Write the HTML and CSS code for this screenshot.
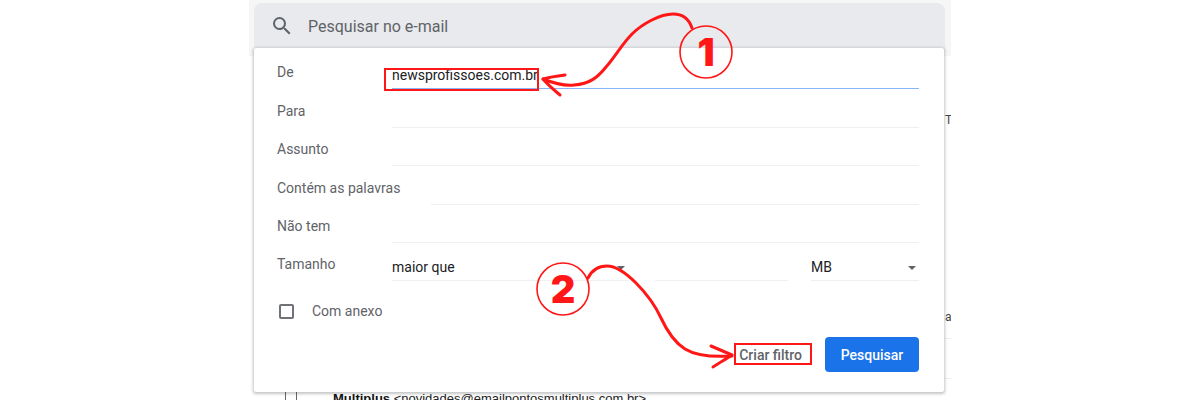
FILE: index.html
```html
<!DOCTYPE html>
<html lang="pt-BR">
<head>
<meta charset="utf-8">
<title>Pesquisar no e-mail</title>
<link rel="stylesheet" href="styles.css">
</head>
<body>
<div class="app">
  <header class="topbar">
    <div class="searchbar">
      <svg class="search-icon" viewBox="0 0 24 24" width="24" height="24"><path fill="#5f6368" d="M15.5 14h-.79l-.28-.27A6.47 6.47 0 0 0 16 9.5 6.5 6.5 0 1 0 9.5 16c1.61 0 3.09-.59 4.23-1.57l.27.28v.79l5 4.99L20.49 19l-4.99-5zm-6 0C7.01 14 5 11.99 5 9.5S7.01 5 9.5 5 14 7.01 14 9.5 11.99 14 9.5 14z"/></svg>
      <span class="search-text">Pesquisar no e-mail</span>
    </div>
  </header>
  <div class="behind">
    <div class="peek peek-t">T</div>
    <div class="peek peek-a">a</div>
    <div class="rule rule-1"></div>
    <div class="rule rule-2"></div>
    <div class="mailrow"><span class="cb"></span><span class="cb"></span><span class="mail"><b>Multiplus</b> &lt;novidades@emailpontosmultiplus.com.br&gt;</span></div>
  </div>
  <section class="card">
    <div class="row"><span class="label">De</span><span class="field active">newsprofissoes.com.br</span></div>
    <div class="row"><span class="label">Para</span><span class="field"></span></div>
    <div class="row"><span class="label">Assunto</span><span class="field"></span></div>
    <div class="row"><span class="label auto">Contém as palavras</span><span class="field"></span></div>
    <div class="row"><span class="label">Não tem</span><span class="field"></span></div>
    <div class="row">
      <span class="label">Tamanho</span>
      <span class="field size-op">maior que<i class="caret"></i></span>
      <span class="field size-num"></span>
      <span class="field size-unit">MB<i class="caret"></i></span>
    </div>
    <div class="check-row"><span class="checkbox"></span><span class="check-label">Com anexo</span></div>
    <div class="actions">
      <span class="create">Criar filtro</span>
      <button class="submit" type="button">Pesquisar</button>
    </div>
  </section>
</div>
<svg class="notes" viewBox="0 0 1200 400" width="1200" height="400">
  <g fill="none" stroke="#ff1616">
    <rect x="385" y="69" width="153" height="21" stroke-width="2"/>
    <rect x="735" y="344" width="76" height="20" stroke-width="2"/>
    <circle cx="706" cy="52" r="26" stroke-width="1.6"/>
    <circle cx="563" cy="289" r="26" stroke-width="1.6"/>
    <g stroke-width="3" stroke-linecap="round" stroke-linejoin="round">
      <path d="M692 28C689 19 682 14 673 14C660 14 642 24 632 34C622 44 615 57 606 67C598 77 590 84 574 85C564 86 553 83 543 79"/>
      <path d="M565 75C557 76 550 77 543 79C548 85 554 90 560 95"/>
      <path d="M588 278C592 270 599 266 607 266C618 266 628 275 636 283C648 295 655 305 661 318C667 331 674 342 685 349C698 357 716 357 732 356"/>
      <path d="M711 346C718 349 725 352 732 355C726 359 719 363 713 367"/>
    </g>
  </g>
  <text class="num" x="706" y="66">1</text>
  <text class="num" x="563" y="303">2</text>
</svg>
</body>
</html>
```
FILE: styles.css
```css
* { box-sizing: border-box; }
html, body { margin: 0; height: 400px; overflow: hidden; background: #fff; }
body { font-family: Roboto, "Liberation Sans", sans-serif; font-size: 14px; position: relative; }
.app { position: relative; width: 702px; height: 400px; margin-left: 249px; background: #fff; overflow: hidden; }
.topbar { height: 56px; background: #f6f6f6; padding: 3px 6px 0 5px; }
.searchbar { height: 48px; background: #e8eaed; border-radius: 8px 8px 0 0; display: flex; align-items: center; padding: 0 0 2px 16px; }
.search-icon { flex: none; }
.search-text { margin-left: 14px; font-size: 16px; color: #5f6368; }
.behind { position: relative; height: 344px; }
.peek { position: absolute; left: 696px; color: #444; font-size: 12px; }
.peek-t { top: 57px; }
.peek-a { top: 254px; }
.rule { position: absolute; left: 695px; width: 7px; height: 1px; background: #eee; }
.rule-1 { top: 282px; }
.rule-2 { top: 322px; }
.mailrow { position: absolute; left: 36px; top: 336px; display: flex; align-items: center; height: 13px; }
.cb { width: 1px; height: 13px; background: #666; margin-right: 10px; }
.mail { margin-left: 26px; font-family: "Liberation Sans", sans-serif; font-size: 13px; color: #222; white-space: nowrap; }
.mail b { color: #111; }
.card { position: absolute; left: 5px; top: 48px; width: 690px; height: 344px; background: #fff; border-radius: 2px; box-shadow: 0 1px 3px 1px rgba(60,64,67,.3); padding: 3px 25px 0 23px; }
.row { height: 38.4px; display: flex; align-items: flex-end; }
.label { flex: none; width: 115px; color: #5f6368; font-size: 14px; line-height: 20px; padding-bottom: 7px; }
.label.auto { width: auto; margin-right: 31px; }
.field { flex: 1; position: relative; height: 27px; line-height: 26px; border-bottom: 1px solid #eff0f1; color: #202124; font-size: 14px; }
.field.active { border-bottom-color: #8ab4f8; }
.size-op { flex: none; width: 236px; }
.size-num { flex: none; width: 133px; margin-left: 27px; }
.size-unit { flex: none; width: 108px; margin-left: 23px; }
.caret { position: absolute; right: 3px; top: 12px; border: 4px solid transparent; border-top: 4px solid #5f6368; border-bottom: 0; }
.check-row { display: flex; align-items: center; height: 20px; margin-top: 20px; }
.checkbox { width: 15px; height: 15px; margin-left: 2px; border: 2px solid #6f7276; border-radius: 2px; }
.check-label { margin-left: 18px; color: #5f6368; font-size: 14px; }
.actions { display: flex; justify-content: flex-end; align-items: center; margin-top: 16px; }
.create { color: #5f6368; font-size: 14px; font-weight: 500; margin-right: 23px; }
.submit { width: 94px; height: 35px; border: 0; border-radius: 4px; background: #1a73e8; color: #fff; font: 500 14px Roboto, sans-serif; }
.notes { position: absolute; left: 0; top: 0; }
.num { font-family: Inter, sans-serif; font-weight: 900; font-size: 38px; fill: #ff1616; text-anchor: middle; }
```
